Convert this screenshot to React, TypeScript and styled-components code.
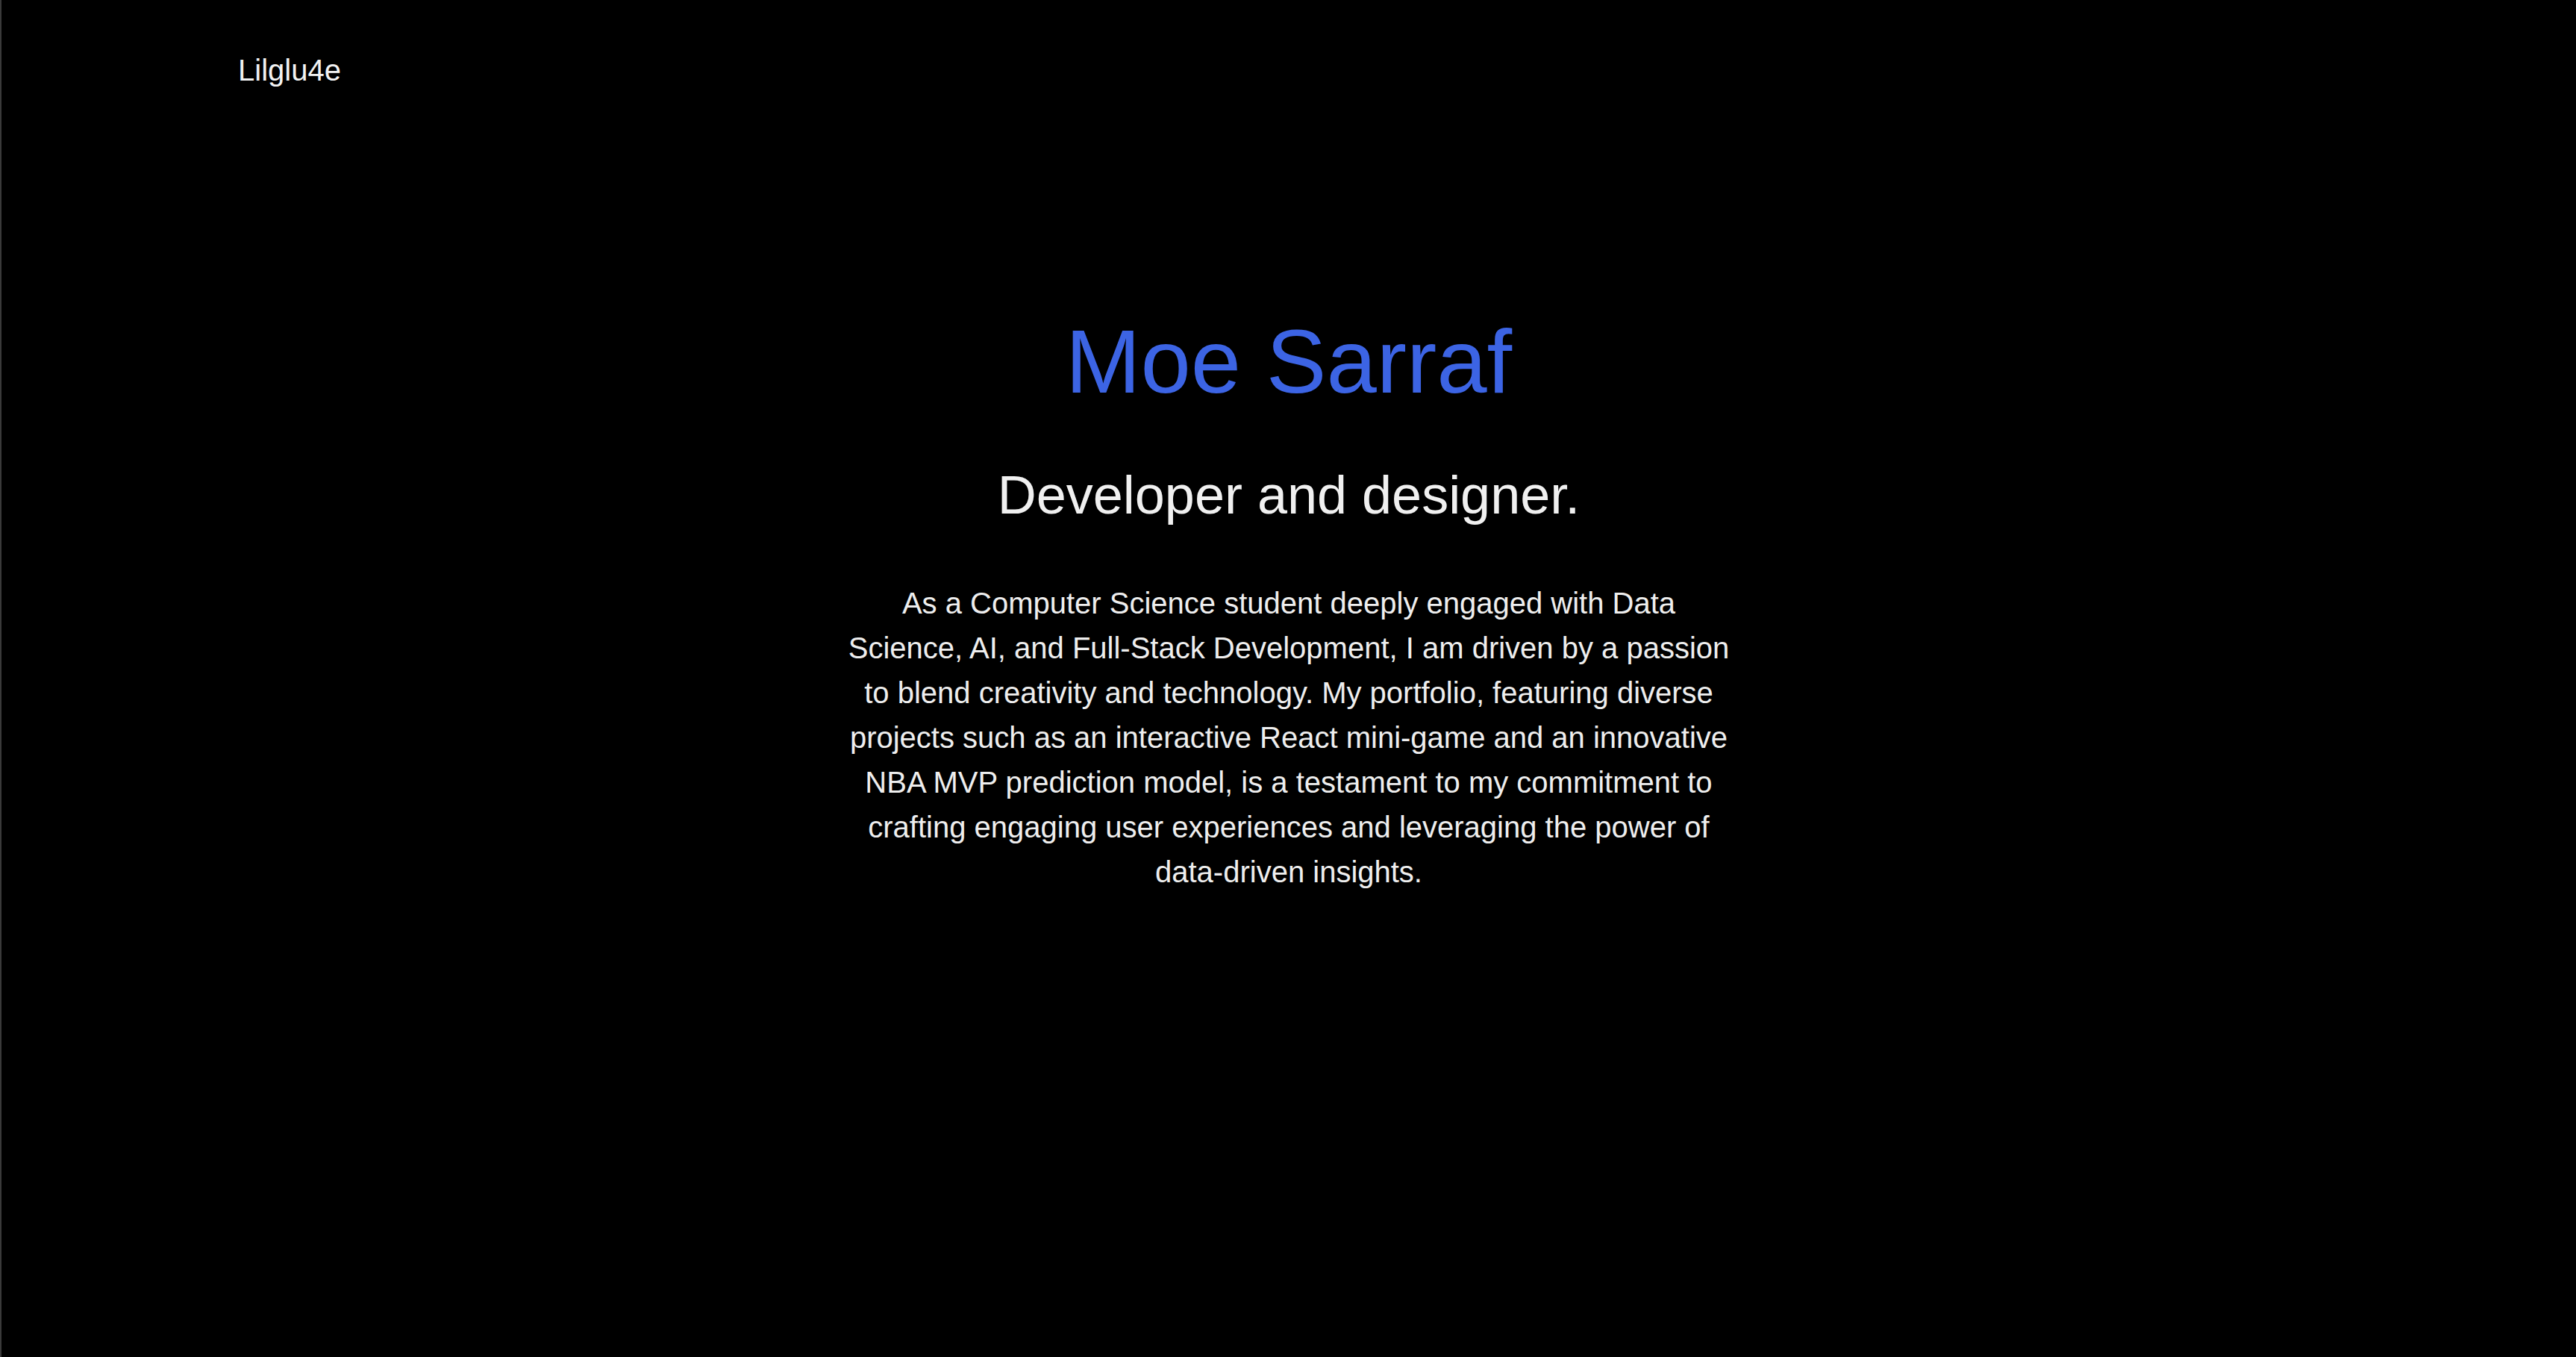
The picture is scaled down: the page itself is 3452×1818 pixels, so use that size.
import React from "react";
import styled, { createGlobalStyle } from "styled-components";

const Global = createGlobalStyle`
  html, body {
    margin: 0;
    padding: 0;
    background: #000;
  }
  body {
    font-family: "Liberation Sans", Arial, sans-serif;
    color: #f0f0f0;
  }
`;

const Page = styled.div`
  min-height: 1818px;
  box-sizing: border-box;
  border-left: 2px solid #3a3a3a;
  background: #000;
  display: flex;
  flex-direction: column;
`;

const Header = styled.header`
  display: flex;
  align-items: center;
  padding: 74px 0 0 317px;
`;

const Logo = styled.div`
  font-size: 40px;
  line-height: 1;
  color: #f2f2f2;
`;

const Hero = styled.main`
  display: flex;
  flex-direction: column;
  align-items: center;
  text-align: center;
  padding-top: 310px;
`;

const Name = styled.h1`
  margin: 0;
  font-size: 121px;
  line-height: 1;
  font-weight: 400;
  color: #3c64e4;
`;

const Role = styled.h2`
  margin: 82px 0 0;
  font-size: 72px;
  line-height: 1;
  font-weight: 400;
  color: #f0f0f0;
`;

const Bio = styled.p`
  margin: 79px 0 0;
  width: 1190px;
  font-size: 40px;
  line-height: 60px;
  color: #eeeeee;
`;

export default function App() {
  return (
    <>
      <Global />
      <Page>
        <Header>
          <Logo>Lilglu4e</Logo>
        </Header>
        <Hero>
          <Name>Moe Sarraf</Name>
          <Role>Developer and designer.</Role>
          <Bio>
            As a Computer Science student deeply engaged with Data Science, AI,
            and Full-Stack Development, I am driven by a passion to blend
            creativity and technology. My portfolio, featuring diverse projects
            such as an interactive React mini-game and an innovative NBA MVP
            prediction model, is a testament to my commitment to crafting
            engaging user experiences and leveraging the power of data-driven
            insights.
          </Bio>
        </Hero>
      </Page>
    </>
  );
}
